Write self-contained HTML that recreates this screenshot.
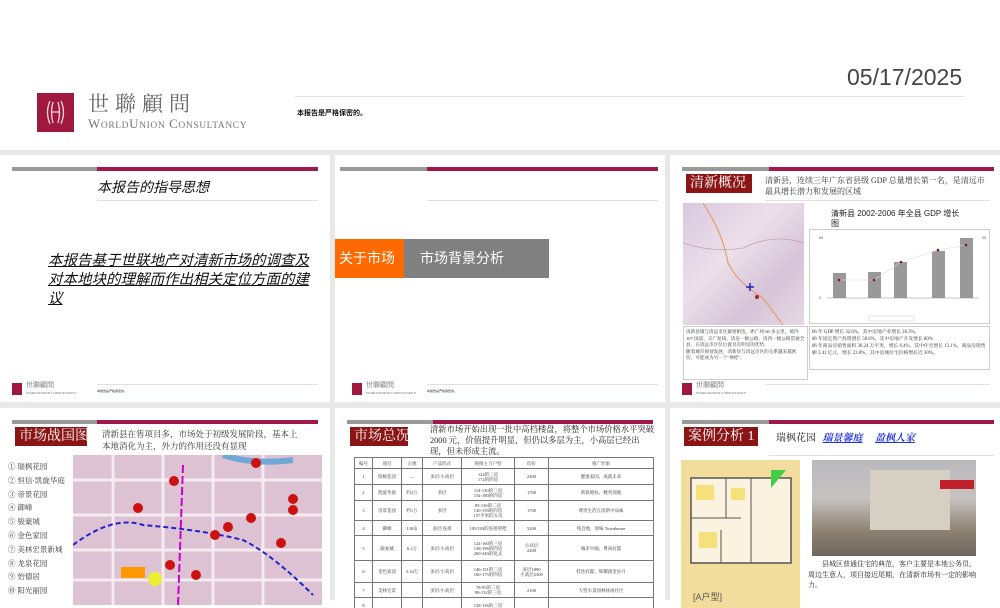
<!DOCTYPE html>
<html><head><meta charset="utf-8">
<style>
*{margin:0;padding:0;box-sizing:border-box}
body{width:1000px;height:600px;overflow:hidden;background:#fff;position:relative;font-family:"Liberation Sans","Noto Sans CJK SC",sans-serif;color:#222}
.a{position:absolute}
.bg{left:0;top:150px;width:1000px;height:450px;background:#e8e8e8}
.s{position:absolute;background:#fff;overflow:hidden}
.g{position:absolute;top:12px;left:12px;width:85px;height:4px;background:#999}
.c{position:absolute;top:12px;left:97px;width:221px;height:4px;background:#a0174a}
.hl{position:absolute;left:97px;width:221px;height:1px;background:#e6dde0}
.fl{position:absolute;left:12px;top:228px;width:10px;height:12px;background:#a0173f}
.ft{position:absolute;left:26px;top:227px;font:7px "Liberation Serif","Noto Serif CJK SC",serif;color:#666;line-height:7px}
.fs{position:absolute;left:97px;top:234px;font-size:3px;color:#333}
.tb{position:absolute;background:#8b1515;color:#fff;font:14px "Liberation Serif","Noto Serif CJK SC",serif;line-height:19px;height:19px;padding-left:4px;white-space:nowrap;overflow:hidden}
.sr{font-family:"Liberation Serif","Noto Serif CJK SC",serif}
table{border-collapse:collapse;font:4.5px "Liberation Serif","Noto Serif CJK SC",serif;color:#333}
td{border:0.7px solid #777;text-align:center;vertical-align:middle;line-height:5px}
</style></head><body>
<!-- header -->
<div class="a" style="left:37px;top:93px;width:37px;height:39px;background:#a0173f"></div>
<svg class="a" style="left:37px;top:93px" width="37" height="39"><g fill="none" stroke="#f3d7de" stroke-width="1.3"><path d="M13 8 Q8 19 13 31"/><path d="M24 8 Q29 19 24 31"/><path d="M16 9 Q13 19 16 30"/><path d="M21 9 Q24 19 21 30"/><path d="M14 19 H23"/></g></svg>
<div class="a sr" style="left:88px;top:92px;font-size:21px;color:#666;letter-spacing:6px;line-height:24px">世聯顧問</div>
<div class="a sr" style="left:88px;top:117px;font-size:13px;color:#777;letter-spacing:0.6px;line-height:14px;white-space:nowrap">W<span style="font-size:9.5px">ORLD</span>U<span style="font-size:9.5px">NION</span> C<span style="font-size:9.5px">ONSULTANCY</span></div>
<div class="a" style="left:295px;top:96px;width:669px;height:1px;background:#f0dde3"></div>
<div class="a" style="left:297px;top:108px;font-size:7px;font-weight:bold;color:#111">本报告是严格保密的。</div>
<div class="a" style="left:847px;top:64px;font-size:23px;color:#444;line-height:26px">05/17/2025</div>
<div class="a bg"></div>

<!-- slide 1 -->
<div class="s" style="left:0;top:155px;width:330px;height:247px">
<div class="g"></div><div class="c"></div>
<div class="a" style="left:97px;top:22px;font-size:14px;font-style:italic;color:#111">本报告的指导思想</div>
<div class="hl" style="top:45px"></div>
<div class="a" style="left:48px;top:97px;width:270px;font-size:14.5px;font-style:italic;text-decoration:underline;line-height:19px;color:#111">本报告基于世联地产对清新市场的调查及对本地块的理解而作出相关定位方面的建议</div>
<div class="hl" style="top:229px"></div><div class="fl"></div><div class="ft">世聯顧問<br><span style="font-size:3.5px">WORLDUNION CONSULTANCY</span></div><div class="fs">本报告是严格保密的。</div>
</div>

<!-- slide 2 -->
<div class="s" style="left:335px;top:155px;width:330px;height:247px">
<div class="g" style="left:5px;width:87px"></div><div class="c" style="left:92px;width:231px"></div>
<div class="hl" style="left:92px;width:231px;top:45px"></div>
<div class="a" style="left:0;top:84px;width:69px;height:39px;background:#ff6a00;color:#fff;font-size:14px;line-height:39px;padding-left:4px">关于市场</div>
<div class="a" style="left:69px;top:84px;width:145px;height:39px;background:#808080;color:#fff;font-size:14px;line-height:39px;padding-left:16px">市场背景分析</div>
<div class="hl" style="left:92px;width:231px;top:229px"></div><div class="fl" style="left:17px"></div><div class="ft" style="left:31px">世聯顧問<br><span style="font-size:3.5px">WORLDUNION CONSULTANCY</span></div><div class="fs" style="left:92px">本报告是严格保密的。</div>
</div>

<!-- slide 3 -->
<div class="s" style="left:670px;top:155px;width:330px;height:247px">
<div class="g" style="left:12px;width:87px"></div><div class="c" style="left:99px;width:225px"></div>
<div class="tb" style="left:16px;top:19px;width:66px">清新概况</div>
<div class="a sr" style="left:95px;top:20px;width:225px;font-size:8px;line-height:11px;color:#333">清新县，连续三年广东省县级 GDP 总量增长第一名，是清远市最具增长潜力和发展的区域</div>
<div class="hl" style="left:95px;width:225px;top:45px"></div>
<div class="a" style="left:13px;top:48px;width:121px;height:122px;background:linear-gradient(135deg,#d9c8de,#ece0ea 40%,#d6c4d8 70%,#e6d8e4)"></div>
<svg class="a" style="left:13px;top:48px" width="121" height="122"><path d="M20 0 Q40 30 45 60 Q55 80 80 95 L100 122" stroke="#e2a070" fill="none" stroke-width="1.2"/><path d="M0 40 Q30 50 60 45 Q90 30 121 40" stroke="#c9a0b0" fill="none" stroke-width="0.8"/><path d="M67 80 v8 M63 84 h8" stroke="#22c" stroke-width="1.5"/><circle cx="74" cy="94" r="2" fill="#a22"/></svg>
<div class="a" style="left:161px;top:54px;width:130px;font-size:8px;line-height:10px;color:#222">清新县 2002-2006 年全县 GDP 增长图</div>
<div class="a" style="left:139px;top:74px;width:181px;height:95px;border:1px solid #ccc"></div>
<svg class="a" style="left:139px;top:74px" width="181" height="95" font-size="3.5" font-family="Liberation Sans">
<g fill="#999"><rect x="24" y="44" width="13" height="25"/><rect x="59" y="43" width="13" height="26"/><rect x="85" y="33" width="13" height="36"/><rect x="123" y="22" width="13" height="47"/><rect x="151" y="9" width="13" height="60"/></g>
<polyline points="30,51 65,51 92,33 129,21 157,16" fill="none" stroke="#ddd" stroke-width="0.6"/>
<g fill="#8b1515"><circle cx="30" cy="51" r="1.3"/><circle cx="65" cy="51" r="1.3"/><circle cx="92" cy="33" r="1.3"/><circle cx="129" cy="21" r="1.3"/><circle cx="157" cy="16" r="1.3"/></g>
<line x1="18" y1="69" x2="170" y2="69" stroke="#888" stroke-width="0.5"/>
<g fill="#555"><text x="10" y="10">80</text><text x="10" y="70">0</text><text x="173" y="10">35</text></g>
<rect x="60" y="87" width="45" height="5" fill="none" stroke="#bbb" stroke-width="0.4"/>
</svg>
<div class="a sr" style="left:13px;top:171px;width:125px;height:54px;border:1px solid #ccc;font-size:4.6px;line-height:6.5px;padding:2px;color:#333;overflow:hidden">清新县城与清远市区紧密相连，距广州 60 多公里。境内 107 国道、京广复线、清连一级公路、清四一级公路贯通全县，在清远市区位位置具有明显的优势。<br>随着城市规划发展，清新县与清远市区的关系越来越密切，可能成为另一个"禅桂"。</div>
<div class="a sr" style="left:139px;top:171px;width:181px;height:44px;border:1px solid #ccc;font-size:4.8px;line-height:7px;padding:2px;color:#333;overflow:hidden">06 年 GDP 增长 32.6%，其中房地产业增长 26.3%。<br>06 年固定资产投资增长 50.6%，其中房地产开发增长 80%<br>06 年商品房销售面积 30.24 万平米，增长 6.4%，其中住宅增长 13.1%，商品房销售额 3.41 亿元，增长 23.8%，其中县城住宅价格增长近 30%。</div>
<div class="hl" style="left:95px;width:225px;top:229px"></div><div class="fl"></div><div class="ft">世聯顧問<br><span style="font-size:3.5px">WORLDUNION CONSULTANCY</span></div>
</div>

<!-- slide 4 -->
<div class="s" style="left:0;top:408px;width:330px;height:200px">
<div class="g"></div><div class="c"></div>
<div class="tb" style="left:15px;top:19px;width:72px">市场战国图</div>
<div class="a sr" style="left:102px;top:20px;width:200px;font-size:8.5px;line-height:12px;color:#333">清新县在售项目多，市场处于初级发展阶段，基本上本地消化为主，外力的作用还没有显现</div>
<div class="a sr" style="left:8px;top:52px;width:64px;font-size:7.5px;line-height:13.8px;color:#333">① 瑞枫花园<br>② 恒信·凯旋华庭<br>③ 帝景花园<br>④ 御峰<br>⑤ 骏豪城<br>⑥ 金色家园<br>⑦ 美林宏景新城<br>⑧ 龙泉花园<br>⑨ 怡德居<br>⑩ 阳光丽园</div>
<div class="a" style="left:73px;top:47px;width:249px;height:150px;background:#dcc2d2"></div>
<svg class="a" style="left:73px;top:47px" width="249" height="150"><path d="M0 25 H249 M0 60 H249 M0 95 H249 M0 125 H249 M40 0 V150 M90 0 V150 M140 0 V150 M190 0 V150" stroke="#f4ecf0" stroke-width="3"/><path d="M150 0 Q180 10 220 5" stroke="#6fa8d8" stroke-width="6" fill="none"/><path d="M0 90 Q40 60 70 70 Q130 75 170 85 Q200 100 240 140" stroke="#22c" stroke-width="2" stroke-dasharray="5,3" fill="none"/><path d="M110 10 L105 150" stroke="#c0c" stroke-width="2" stroke-dasharray="8,3"/><rect x="48" y="112" width="24" height="11" fill="#f90"/><circle cx="82" cy="124" r="7" fill="#ee3"/><g fill="#c11"><circle cx="65" cy="53" r="5"/><circle cx="183" cy="8" r="5"/><circle cx="97" cy="110" r="5"/><circle cx="142" cy="80" r="5"/><circle cx="155" cy="72" r="5"/><circle cx="101" cy="26" r="5"/><circle cx="220" cy="55" r="5"/><circle cx="208" cy="88" r="5"/><circle cx="178" cy="63" r="5"/><circle cx="220" cy="44" r="5"/><circle cx="123" cy="120" r="5"/></g></svg>
</div>

<!-- slide 5 -->
<div class="s" style="left:335px;top:408px;width:330px;height:200px">
<div class="g" style="left:12px;width:86px"></div><div class="c" style="left:98px;width:220px"></div>
<div class="tb" style="left:15px;top:19px;width:58px">市场总况</div>
<div class="a sr" style="left:95px;top:16px;width:225px;font-size:8.3px;line-height:11px;color:#222">清新市场开始出现一批中高档楼盘，将整个市场价格水平突破 2000 元，价值提升明显，但仍以多层为主，小高层已经出现，但未形成主流。</div>
<table class="a" style="left:19px;top:49px;width:300px">
<tr style="height:11px"><td style="width:18px">编号</td><td style="width:29px">项目</td><td style="width:21px">占地</td><td style="width:39px">产品形式</td><td style="width:53px">规推主力户型</td><td style="width:34px">均价</td><td>推广形象</td></tr>
<tr style="height:16px"><td>1</td><td>瑞枫花园</td><td>—</td><td>多层/小高层</td><td>124的三房<br>172的四房</td><td>2400</td><td>健康家园、成就未来</td></tr>
<tr style="height:16px"><td>2</td><td>凯旋华庭</td><td>约2万</td><td>多层</td><td>114-130的三房<br>154-180的四房</td><td>1700</td><td>新锐地标、精英领地</td></tr>
<tr style="height:20px"><td>3</td><td>帝景花园</td><td>约1万</td><td>多层</td><td>85-136的二房<br>130-139的四房<br>157平米的五房</td><td>1700</td><td>尊贵生活在清新中品味</td></tr>
<tr style="height:15px"><td>4</td><td>御峰</td><td>130亩</td><td>多层/连排</td><td>185/193的连排别墅</td><td>5200</td><td>纯自地，原味 Townhouse</td></tr>
<tr style="height:25px"><td>5</td><td>骏豪城</td><td>6.2万</td><td>多层/小高层</td><td>124-160的三房<br>138-196的四房<br>260-340的复式</td><td>小高层<br>2200</td><td>城市中轴、尊尚府邸</td></tr>
<tr style="height:22px"><td>6</td><td>金色家园</td><td>3.34万</td><td>多层/小高层</td><td>146-151的三房<br>160-175的四房</td><td>多层1890<br>小高层2300</td><td>桂丝府邸、辉耀流金岁月</td></tr>
<tr style="height:15px"><td>7</td><td>美林宏景</td><td></td><td>多层/小高层</td><td>78-95的二房<br>99-132的三房</td><td>2100</td><td>大型水景园林休闲社区</td></tr>
<tr style="height:15px"><td>8</td><td></td><td></td><td></td><td>128-136的三房</td><td></td><td></td></tr>
</table>
</div>

<!-- slide 6 -->
<div class="s" style="left:670px;top:408px;width:330px;height:200px">
<div class="g" style="left:12px;width:87px"></div><div class="c" style="left:99px;width:225px"></div>
<div class="tb" style="left:14px;top:19px;width:74px">案例分析 1</div>
<div class="a sr" style="left:106px;top:21px;font-size:10px;color:#222;white-space:nowrap">瑞枫花园 <span style="color:#2233dd;font-style:italic;font-weight:bold;text-decoration:underline;margin-left:4px">瑞景馨庭</span> <span style="color:#2233dd;font-style:italic;font-weight:bold;text-decoration:underline;margin-left:10px">盈枫人家</span></div>
<div class="hl" style="left:99px;width:225px;top:47px"></div>
<div class="a" style="left:11px;top:52px;width:119px;height:148px;background:#f3dd9c"></div>
<svg class="a" style="left:11px;top:52px" width="119" height="148"><rect x="10" y="18" width="100" height="85" fill="#fbf3e0" stroke="#555" stroke-width="1.5"/><path d="M10 58 H60 M45 18 V58 M70 18 V103 M40 70 V103" stroke="#555" stroke-width="1"/><rect x="15" y="25" width="18" height="15" fill="#f6e07a"/><rect x="50" y="28" width="14" height="12" fill="#f6e07a"/><rect x="18" y="72" width="18" height="16" fill="#f6e07a"/><path d="M90 10 L105 10 L90 28Z" fill="#4c4"/><text x="12" y="140" font-size="9" fill="#555">[A户型]</text></svg>
<div class="a" style="left:142px;top:52px;width:164px;height:96px;background:linear-gradient(180deg,#b9b9bd 0%,#c6c2c0 40%,#8c8070 75%,#6d6860 100%)"></div>
<div class="a" style="left:200px;top:62px;width:80px;height:60px;background:#d6d0c4"></div>
<div class="a" style="left:270px;top:72px;width:34px;height:9px;background:#c0202a"></div>
<div class="a sr" style="left:138px;top:151px;width:172px;font-size:7px;line-height:10.5px;color:#222;text-indent:2em">县城区普通住宅的典范，客户主要是本地公务员，周边生意人，项目接近尾期，在清新市场有一定的影响力。</div>
</div>
</body></html>
